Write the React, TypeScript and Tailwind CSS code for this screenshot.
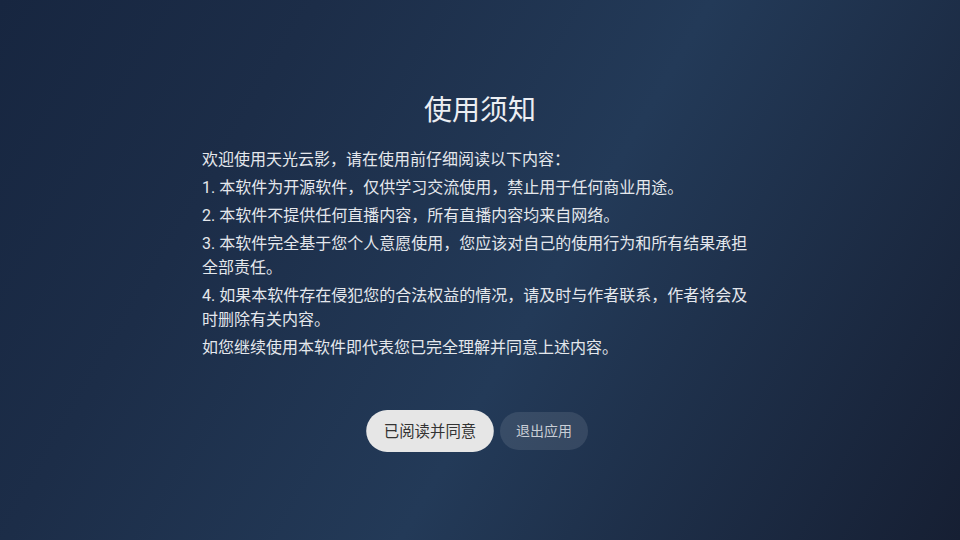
const notes = [
  '欢迎使用天光云影，请在使用前仔细阅读以下内容：',
  '1. 本软件为开源软件，仅供学习交流使用，禁止用于任何商业用途。',
  '2. 本软件不提供任何直播内容，所有直播内容均来自网络。',
  '3. 本软件完全基于您个人意愿使用，您应该对自己的使用行为和所有结果承担全部责任。',
  '4. 如果本软件存在侵犯您的合法权益的情况，请及时与作者联系，作者将会及时删除有关内容。',
  '如您继续使用本软件即代表您已完全理解并同意上述内容。',
]

export default function App() {
  return (
    <div
      className="w-full h-screen flex flex-col items-center pt-[93px] bg-[linear-gradient(120deg,#172640_0%,#1c2d48_25%,#233a58_56%,#161f33_100%)] font-['Roboto','Noto_Sans_CJK_SC',sans-serif]"
    >
      {/* Title */}
      <h1 className="text-[28px] leading-[36px] text-[#eceef2] font-normal">使用须知</h1>

      {/* Notes */}
      <div className="w-[556px] mt-[19px] flex flex-col gap-[4px]">
        {notes.map((line) => (
          <p key={line} className="text-[16px] leading-[24px] text-[#e4e7ec]">
            {line}
          </p>
        ))}
      </div>

      {/* Actions */}
      <div className="mt-[52px] flex items-center gap-[12px]">
        <button className="h-[38px] px-4 rounded-full bg-[#e6e6e6] text-[14px] text-[#333333] scale-110">
          已阅读并同意
        </button>
        <button className="h-[38px] px-4 rounded-full bg-white/10 text-[14px] text-[#c9ced6]">
          退出应用
        </button>
      </div>
    </div>
  )
}
